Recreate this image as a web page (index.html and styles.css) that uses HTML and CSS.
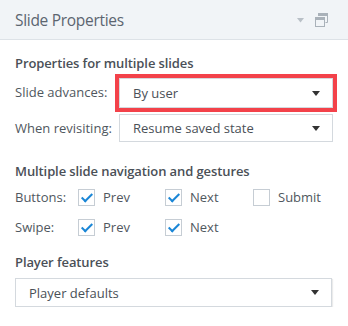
FILE: index.html
```html
<!DOCTYPE html>
<html lang="en">
<head>
    <meta charset="UTF-8">
    <title>Slide Properties</title>
    <link rel="stylesheet" href="styles.css">
</head>
<body>

<div class="panel">
    <div class="panel-header">
        <span class="panel-title">Slide Properties</span>
        <span class="header-icons">
            <svg class="collapse" width="7" height="5" viewBox="0 0 7 5"><path d="M0 0H7L3.5 4.5Z"/></svg>
            <svg class="restore" width="13" height="14" viewBox="0 0 13 14">
                <path d="M3.5 0.5H12.5V9.5H10.5" fill="none"/>
                <rect x="3" y="0" width="10" height="3" stroke="none"/>
                <rect x="0.5" y="4.5" width="9" height="9" fill="#f1f4f7"/>
                <rect x="0" y="4" width="10" height="3" stroke="none"/>
            </svg>
        </span>
    </div>

    <div class="panel-body">
        <h3 class="section-title">Properties for multiple slides</h3>
        <div class="field-grid">
            <label>Slide advances:</label>
            <div class="select highlighted">
                <span>By user</span>
                <svg class="arrow" width="8" height="5" viewBox="0 0 8 5"><path d="M0 0H8L4 5Z"/></svg>
            </div>
            <label>When revisiting:</label>
            <div class="select">
                <span>Resume saved state</span>
                <svg class="arrow" width="8" height="5" viewBox="0 0 8 5"><path d="M0 0H8L4 5Z"/></svg>
            </div>
        </div>

        <h3 class="section-title">Multiple slide navigation and gestures</h3>
        <div class="check-grid">
            <span class="row-label">Buttons:</span>
            <label class="check"><span class="box checked"></span>Prev</label>
            <label class="check"><span class="box checked"></span>Next</label>
            <label class="check"><span class="box"></span>Submit</label>

            <span class="row-label">Swipe:</span>
            <label class="check"><span class="box checked"></span>Prev</label>
            <label class="check"><span class="box checked"></span>Next</label>
        </div>

        <h3 class="section-title">Player features</h3>
        <div class="select wide">
            <span>Player defaults</span>
            <svg class="arrow" width="8" height="5" viewBox="0 0 8 5"><path d="M0 0H8L4 5Z"/></svg>
        </div>
    </div>
</div>

</body>
</html>
```

FILE: styles.css
```css
body {
    margin: 0;
    background: #fff;
    font-family: "Open Sans", "Noto Sans", sans-serif;
    color: #50575e;
}
.panel {
    width: 348px;
}
.panel-header {
    height: 40px;
    box-sizing: border-box;
    background: #f1f4f7;
    border-bottom: 1px solid #dde2e7;
    display: flex;
    align-items: center;
    justify-content: space-between;
    padding: 0 20px 0 15px;
}
.panel-title {
    font-size: 15.5px;
    color: #5c6570;
    letter-spacing: -0.3px;
}
.header-icons {
    display: flex;
    align-items: center;
    gap: 11px;
}
.collapse {
    fill: #b9c0c7;
    margin-top: 1px;
}
.restore {
    fill: #a9b1b9;
    stroke: #a9b1b9;
    stroke-width: 1;
}
.panel-body {
    padding: 14px 15px 0 15px;
    font-size: 13px;
    line-height: 18px;
}
.section-title {
    font-size: 13px;
    line-height: 18px;
    font-weight: 600;
    margin: 0 0 1px 0;
    color: #4a5057;
    letter-spacing: -0.1px;
}
.field-grid {
    display: grid;
    grid-template-columns: 104px 214px;
    row-gap: 4px;
    align-items: center;
    margin-bottom: 20px;
}
.select {
    height: 28px;
    box-sizing: border-box;
    border: 1px solid #d4d9de;
    background: #fff;
    display: flex;
    align-items: center;
    justify-content: space-between;
    padding: 0 12px 0 13px;
    color: #4a5057;
}
.select.highlighted {
    height: 30px;
    outline: 4px solid #f3424a;
    margin-top: 5px;
    margin-bottom: 2px;
}
.select.wide {
    width: 317px;
    height: 29px;
    margin-top: 7px;
    box-shadow: 1px 1px 1px rgba(0, 0, 0, 0.08);
}
.arrow {
    fill: #333;
}
.check-grid {
    display: grid;
    grid-template-columns: 63px 87px 88px 80px;
    row-gap: 12px;
    align-items: center;
    margin-top: 8px;
    margin-bottom: 17px;
}
.check {
    display: flex;
    align-items: center;
    gap: 8px;
}
.box {
    width: 17px;
    height: 17px;
    box-sizing: border-box;
    border: 1px solid #c6cdd4;
    background: #fff;
    position: relative;
}
.box.checked::after {
    content: "";
    position: absolute;
    left: 5px;
    top: 1px;
    width: 4px;
    height: 9px;
    border: solid #1a86d6;
    border-width: 0 2px 2px 0;
    transform: rotate(45deg);
}
```
